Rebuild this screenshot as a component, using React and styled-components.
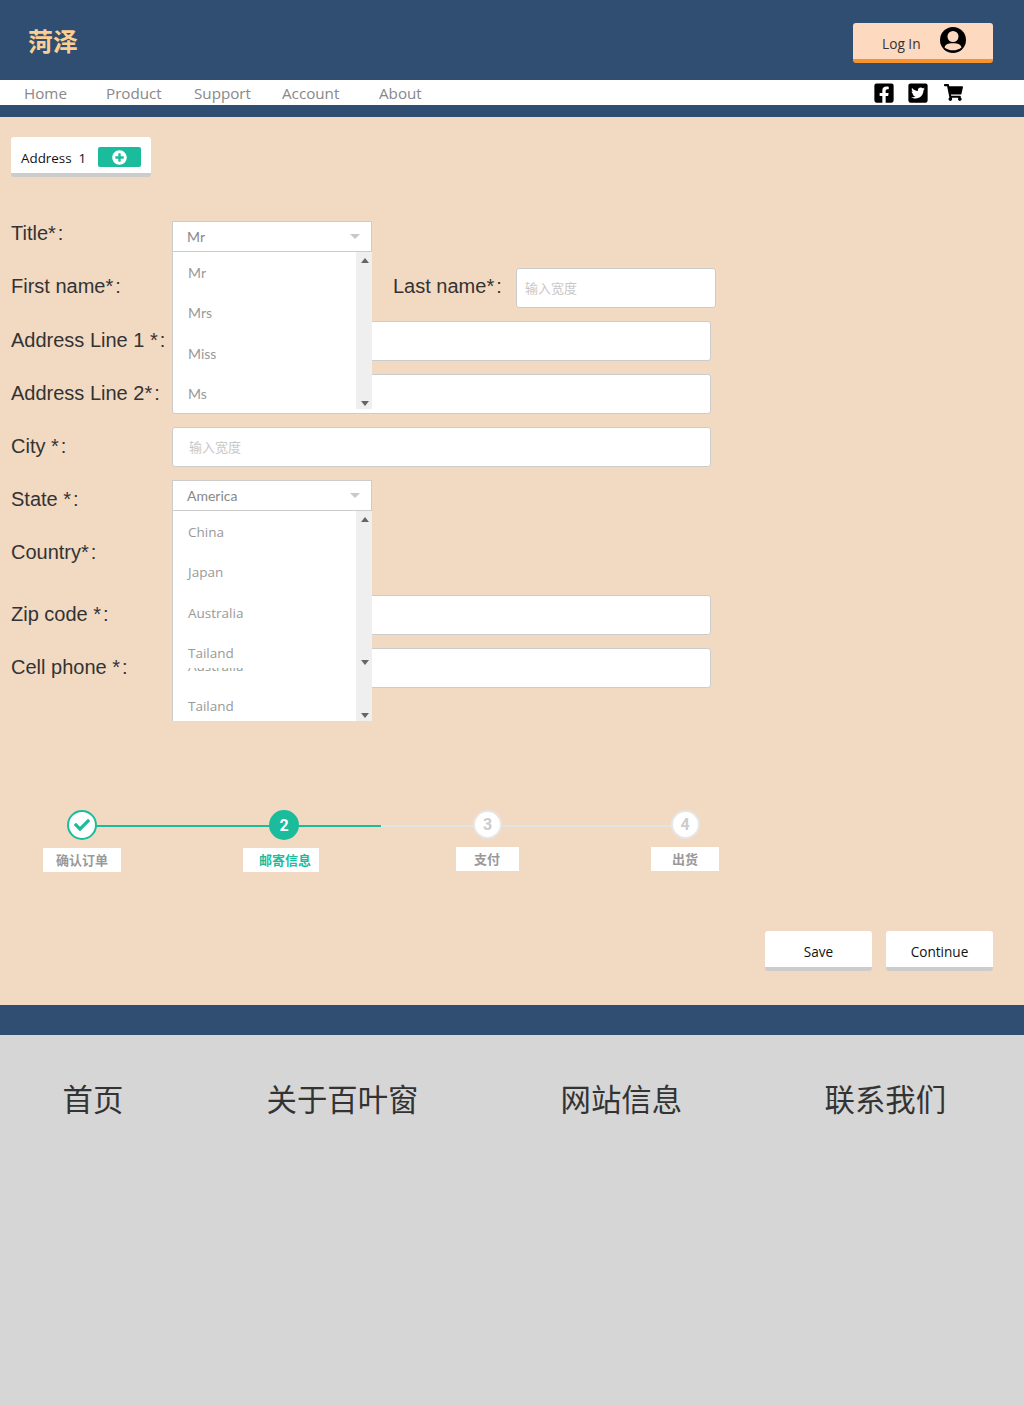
import styled, { createGlobalStyle } from 'styled-components';
import { FaFacebookSquare, FaTwitterSquare, FaShoppingCart, FaCheck, FaPlusCircle } from 'react-icons/fa';

const UI_FONT = '"Open Sans", "Noto Sans", "Noto Sans CJK SC", sans-serif';
const CJK_FONT = '"Noto Sans CJK SC", sans-serif';

const GlobalStyle = createGlobalStyle`
    html, body {
        margin: 0;
        padding: 0;
        background: #d6d6d6;
    }
    * {
        box-sizing: border-box;
    }
`;

const Header = styled.header`
    display: flex;
    align-items: center;
    justify-content: space-between;
    height: 80px;
    padding: 23px 31px 17px 28px;
    background: #2f4e71;
`;

const Logo = styled.div`
    font: 700 25px/1 ${CJK_FONT};
    color: #fbcf91;
    margin-top: -5px;
`;

const LoginButton = styled.button`
    display: flex;
    align-items: center;
    justify-content: space-between;
    width: 140px;
    height: 40px;
    padding: 0 26px 2px 29px;
    background: #fdd9bf;
    border: none;
    border-bottom: 4px solid #f7932c;
    border-radius: 3px;
    font: 13.7px ${UI_FONT};
    color: #333;
`;

const LoginText = styled.span`
    padding-top: 6px;
`;

const NavBar = styled.nav`
    display: flex;
    align-items: center;
    height: 25px;
    padding: 0 61px 0 24px;
    background: #fff;
`;

const NavLink = styled.a`
    flex: none;
    width: ${(p) => p.$w}px;
    padding-top: 1px;
    font: 15.2px/25px ${UI_FONT};
    color: #888;
`;

const Socials = styled.div`
    display: flex;
    align-items: center;
    gap: 12px;
    margin-left: auto;
    color: #000;
    & > svg:last-child {
        margin-left: 3px;
    }
`;

const Strip = styled.div`
    height: 12px;
    background: #2f4e71;
`;

const Main = styled.main`
    height: 888px;
    padding: 20px 31px 0 11px;
    background: #f2d9c2;
`;

const AddressTab = styled.div`
    display: flex;
    align-items: center;
    width: 140px;
    height: 40px;
    padding: 6px 10px 0;
    background: #fff;
    border-bottom: 4px solid #ccc;
    border-radius: 3px;
    font: 13.4px ${UI_FONT};
    color: #111;
    white-space: pre;
`;

const AddButton = styled.span`
    display: flex;
    align-items: center;
    justify-content: center;
    width: 43px;
    height: 20px;
    margin-left: auto;
    margin-top: -2px;
    border-radius: 2px;
    background: #1abc9c;
    color: #fff;
    font-size: 15px;
`;

const Form = styled.form`
    display: flex;
    flex-direction: column;
    width: 705px;
    margin-top: 44px;
`;

const Row = styled.div`
    display: flex;
    align-items: flex-start;
    height: ${(p) => p.$h || 53}px;
`;

const Label = styled.label`
    flex: none;
    width: ${(p) => p.$w || 161}px;
    margin-left: ${(p) => p.$ml || 0}px;
    padding-top: ${(p) => p.$top ?? 8}px;
    font: 20px/23px "Liberation Sans", Arial, sans-serif;
    color: #333;
`;

const Colon = styled.span`
    margin-left: 2px;
`;

const TextInput = styled.div`
    flex: none;
    width: ${(p) => p.$w || 539}px;
    height: 40px;
    padding: 0 ${(p) => p.$pad || 16}px;
    background: #fff;
    border: 1px solid #ccc;
    border-radius: 3px;
    font: 13px/38px ${CJK_FONT};
    color: #c8c8c8;
`;

const Select = styled.div`
    position: relative;
    flex: none;
    width: 200px;
    z-index: ${(p) => p.$z};
`;

const SelectHead = styled.div`
    display: flex;
    align-items: center;
    justify-content: space-between;
    height: 31px;
    padding: 0 11px 0 14px;
    background: #fff;
    border: 1px solid #ccc;
    font: 14px "Lato", sans-serif;
    color: #888;
    &::after {
        content: '';
        border: 5px solid transparent;
        border-top: 5px solid #c8c8c8;
        margin-top: 5px;
    }
`;

const Menu = styled.div`
    position: absolute;
    top: 31px;
    left: 0;
    width: 200px;
    height: 157px;
    padding-top: 1px;
    background: #fff;
    border-left: 1px solid #ccc;
    overflow: hidden;
`;

const Option = styled.div`
    height: 40.4px;
    padding-left: 15px;
    font: ${(p) => (p.$wide ? '13.5px/40.4px "Open Sans"' : '14px/40.4px "Lato"')}, sans-serif;
    color: #999;
`;

const Scrollbar = styled.div`
    position: absolute;
    top: 0;
    right: 0;
    bottom: 0;
    display: flex;
    flex-direction: column;
    align-items: center;
    justify-content: space-between;
    width: 16px;
    padding: 6px 0 3px 2px;
    background: #efefef;
    &::before,
    &::after {
        content: '';
        border: 4px solid transparent;
    }
    &::before {
        border-top: 0;
        border-bottom: 5px solid #666;
    }
    &::after {
        border-bottom: 0;
        border-top: 5px solid #666;
    }
`;

const Steps = styled.div`
    position: relative;
    display: flex;
    height: 62px;
    margin-top: 109px;
`;

// 进度线, 压在圆点下面
const Track = styled.div`
    position: absolute;
    top: 15px;
    left: 71px;
    width: 603px;
    height: 2px;
    background: #e3e3e3;
`;

const TrackFill = styled.div`
    width: ${(p) => p.$w}px;
    height: 100%;
    background: #1abc9c;
`;

const Step = styled.div`
    position: relative;
    display: flex;
    flex: none;
    flex-direction: column;
    align-items: center;
    width: ${(p) => p.$w}px;
    margin-left: ${(p) => p.$ml}px;
`;

const Dot = styled.div`
    display: flex;
    align-items: center;
    justify-content: center;
    width: ${(p) => (p.$state === 'todo' ? 29 : 30)}px;
    height: ${(p) => (p.$state === 'todo' ? 29 : 30)}px;
    margin-left: ${(p) => (p.$state === 'active' ? 6 : 0)}px;
    border-radius: 50%;
    border: 2px solid ${(p) => (p.$state === 'todo' ? '#e6e6e6' : '#1abc9c')};
    background: ${(p) => (p.$state === 'active' ? '#1abc9c' : '#fff')};
    color: ${(p) => (p.$state === 'active' ? '#fff' : p.$state === 'todo' ? '#ccc' : '#1abc9c')};
    font: 700 16px "Roboto", sans-serif;
`;

const StepLabel = styled.div`
    width: 100%;
    height: 24px;
    margin-top: 8px;
    padding-left: ${(p) => p.$pad}px;
    background: #fff;
    font: 700 13px/24px ${CJK_FONT};
    color: ${(p) => (p.$active ? '#1abc9c' : '#999')};
    white-space: nowrap;
`;

const Actions = styled.div`
    display: flex;
    justify-content: flex-end;
    gap: 14px;
    margin-top: 59px;
`;

const ActionButton = styled.button`
    width: 107px;
    height: 40px;
    padding: 4px 0 0;
    background: #fff;
    border: none;
    border-bottom: 4px solid #ccc;
    border-radius: 3px;
    font: 13.6px ${UI_FONT};
    color: #111;
`;

const Band = styled.div`
    height: 30px;
    background: #2f4e71;
`;

const Footer = styled.footer`
    display: flex;
    height: 371px;
    padding: 42px 0 0 62.500px;
    background: #d6d6d6;
`;

const FooterLink = styled.a`
    flex: none;
    width: ${(p) => p.$w}px;
    font: 400 30.4px/42px ${CJK_FONT};
    color: #333;
    white-space: nowrap;
`;

// 头像图标
const UserIcon = () => (
    <svg width="28" height="28" viewBox="0 0 28 28">
        <circle cx="14" cy="14" r="13" fill="#000" />
        <circle cx="14" cy="10.500" r="5.500" fill="#fdd9bf" />
        <path d="M5.500 21.500c.8-3.300 3.300-4.300 8.500-4.300s7.700 1 8.500 4.300c-2.300 1.900-5.200 2.800-8.500 2.800s-6.200-.9-8.500-2.800z" fill="#fdd9bf" />
    </svg>
);

const navItems = [
    ['Home', 82],
    ['Product', 88],
    ['Support', 88],
    ['Account', 97],
    ['About', 60],
];

const footerItems = [
    ['首页', 204],
    ['关于百叶窗', 294],
    ['网站信息', 264],
    ['联系我们', 120],
];

const steps = [
    { name: '确认订单', w: 78, ml: 32, pad: 13, state: 'done' },
    { name: '邮寄信息', w: 76, ml: 122, pad: 16, state: 'active', mark: '2' },
    { name: '支付', w: 63, ml: 137, pad: 18, state: 'todo', mark: '3' },
    { name: '出货', w: 68, ml: 132, pad: 21, state: 'todo', mark: '4' },
];

const countries = ['China', 'Japan', 'Australia', 'Tailand'];

const Field = ({ children, top }) => (
    <Label $top={top}>
        {children}
        <Colon>:</Colon>
    </Label>
);

const App = () => (
    <>
        <GlobalStyle />
        <Header>
            <Logo>菏泽</Logo>
            <LoginButton>
                <LoginText>Log In</LoginText>
                <UserIcon />
            </LoginButton>
        </Header>
        <NavBar>
            {navItems.map(([name, w]) => (
                <NavLink key={name} $w={w}>{name}</NavLink>
            ))}
            <Socials>
                <FaFacebookSquare size={22} />
                <FaTwitterSquare size={22} />
                <FaShoppingCart size={19} />
            </Socials>
        </NavBar>
        <Strip />
        <Main>
            <AddressTab>
                Address  1
                <AddButton><FaPlusCircle /></AddButton>
            </AddressTab>
            <Form>
                <Row $h={47}>
                    <Field top={1}>Title*</Field>
                    <Select $z={4}>
                        <SelectHead>Mr</SelectHead>
                        <Menu>
                            {['Mr', 'Mrs', 'Miss', 'Ms'].map((o) => (
                                <Option key={o}>{o}</Option>
                            ))}
                            <Scrollbar />
                        </Menu>
                    </Select>
                </Row>
                <Row>
                    <Field top={7}>First name*</Field>
                    <TextInput $w={200} />
                    <Label $w={123} $ml={21} $top={7}>
                        Last name*<Colon>:</Colon>
                    </Label>
                    <TextInput $w={200} $pad={8}>输入宽度</TextInput>
                </Row>
                <Row>
                    <Field>Address Line 1 *</Field>
                    <TextInput />
                </Row>
                <Row>
                    <Field>Address Line 2*</Field>
                    <TextInput />
                </Row>
                <Row>
                    <Field>City *</Field>
                    <TextInput>输入宽度</TextInput>
                </Row>
                <Row>
                    <Field>State *</Field>
                    <Select $z={3}>
                        <SelectHead>America</SelectHead>
                        <Menu>
                            {countries.map((o) => (
                                <Option key={o} $wide>{o}</Option>
                            ))}
                            <Scrollbar />
                        </Menu>
                    </Select>
                </Row>
                <Row $h={62}>
                    <Field>Country*</Field>
                    <Select $z={2}>
                        <Menu>
                            {countries.map((o) => (
                                <Option key={o} $wide>{o}</Option>
                            ))}
                            <Scrollbar />
                        </Menu>
                    </Select>
                </Row>
                <Row>
                    <Field>Zip code *</Field>
                    <TextInput />
                </Row>
                <Row>
                    <Field>Cell phone *</Field>
                    <TextInput />
                </Row>
            </Form>
            <Steps>
                <Track>
                    <TrackFill $w={299} />
                </Track>
                {steps.map((s) => (
                    <Step key={s.name} $w={s.w} $ml={s.ml}>
                        <Dot $state={s.state}>{s.mark || <FaCheck size={16} />}</Dot>
                        <StepLabel $pad={s.pad} $active={s.state === 'active'}>{s.name}</StepLabel>
                    </Step>
                ))}
            </Steps>
            <Actions>
                <ActionButton>Save</ActionButton>
                <ActionButton>Continue</ActionButton>
            </Actions>
        </Main>
        <Band />
        <Footer>
            {footerItems.map(([name, w]) => (
                <FooterLink key={name} $w={w}>{name}</FooterLink>
            ))}
        </Footer>
    </>
);

export default App;
